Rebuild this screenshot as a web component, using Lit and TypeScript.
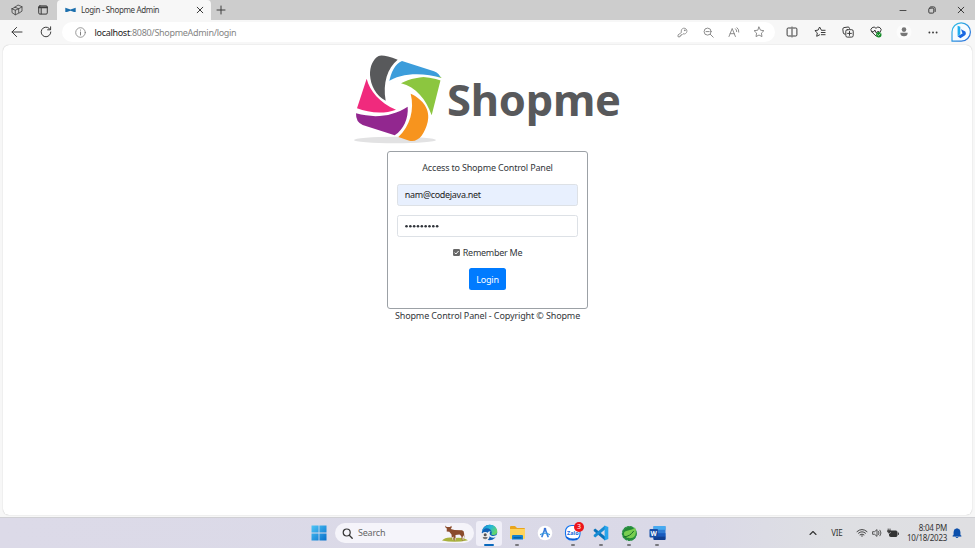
import { LitElement, html, css, svg, TemplateResult } from "lit";
import { customElement } from "lit/decorators.js";

const icon = (w: number, h: number, box: string, body: TemplateResult) =>
  html`<svg width=${w} height=${h} viewBox=${box} fill="none" stroke="currentColor" stroke-width="1" stroke-linecap="round" stroke-linejoin="round">${body}</svg>`;

const workspaces = icon(12, 12, "0 0 12 12", svg`<path stroke-width=".8" d="M4 3.2 7 1l4 1.700v4.400L8.200 9M4 3.200 7.600 4.800 11 2.900M1 4.800 4 3.200M1 4.800v3.800l3.300 2.200 3.400-1.600V4.900M1 4.800l3.300 1.400 3.300-1.400M4.300 6.200v4.500"/>`);
const tabActions = icon(10, 10, "0 0 10 10", svg`<rect x=".7" y=".9" width="8.600" height="8.200" rx="1.200"/><path d="M1 2.400h8" stroke-width="1.800"/><path d="M3.200 3.500v5.300"/>`);
const favicon = icon(11, 6, "0 0 11 6", svg`<path d="M.3.8 5.500 2.500 10.700.8v4.100L9 5.100 5.500 3.700 2 5.100.3 4.900z" fill="#1c6fad" stroke="none"/>`);
const back = icon(12, 12, "0 0 12 12", svg`<path d="M1 6h10M5.600 1.400 1 6l4.600 4.600"/>`);
const reload = icon(12, 12, "0 0 12 12", svg`<path d="M10.800 6A4.800 4.800 0 1 1 9.200 2.400L10.400 3.600M10.600.8v3H7.600"/>`);
const info = icon(11, 11, "0 0 11 11", svg`<circle cx="5.500" cy="5.500" r="4.800" stroke-width=".8"/><path d="M5.500 5v3M5.500 3v.2"/>`);
const key = icon(11, 11, "0 0 11 11", svg`<path d="M4.300 5.100A2.900 2.900 0 1 1 6 6.800L5 7.800H4v1H3v1H1V8.300z" stroke-width=".8"/><circle cx="7.700" cy="3.300" r=".3"/>`);
const zoomOut = icon(11, 11, "0 0 11 11", svg`<circle cx="4.600" cy="4.600" r="3.500" stroke-width=".9"/><path d="M3 4.600h3.200M7.300 7.300 10.200 10.200" stroke-width=".9"/>`);
const readAloud = icon(12, 11, "0 0 12 11", svg`<path d="m1 9.500 3.200-8 3.200 8M2.200 6.700h4M7.500 1.800q1.300 1 1.200 2.800M9 .7q2.200 1.600 1.800 4.400" stroke-width=".9"/>`);
const star = icon(12, 12, "0 0 12 12", svg`<path d="M6 1.100 7.500 4.200l3.400.5-2.500 2.400.6 3.500L6 9l-3 1.600.6-3.500L1.100 4.700l3.400-.5z" stroke-width=".9"/>`);
const split = icon(12, 12, "0 0 12 12", svg`<path d="M5 2H2.200Q1.100 2 1.100 3.100v5.800Q1.100 10 2.200 10H5M7 2h2.800q1.100 0 1.100 1.100v5.800q0 1.100-1.100 1.100H7M6 1v10"/>`);
const favorites = icon(12, 12, "0 0 12 12", svg`<path d="M7.300 4 5.600 1 4.100 4.100.9 4.600l2.400 2.300-.6 3.400L5.600 8.800M7.700 4.300h3.400M7.300 6.500h3.800M7.300 8.700h3.800"/>`);
const collections = icon(12, 12, "0 0 12 12", svg`<path d="M2.800 8.200Q1.600 8.200 1.300 7L.8 3.100Q.8 1.900 2 1.600L6.100 1q1.300 0 1.500 1.400"/><rect x="3.800" y="3.700" width="7.400" height="7.400" rx="1.500"/><path d="M7.500 5.500v3.800M5.600 7.400h3.800"/>`);
const essentials = icon(12, 12, "0 0 12 12", svg`<path d="M6.200 10.200 1.500 5.600A2.600 2.600 0 0 1 6 2.300a2.600 2.600 0 0 1 4.600 3.300M1.600 5.700h2.200l1-1.700 1.500 3 1-1.400H9"/><circle cx="8.800" cy="8.700" r="2.700" fill="#118a25" stroke="none"/><path d="m7.500 8.700 1 1 1.700-1.900" stroke="#fff" stroke-width=".7"/>`);
const profile = icon(16, 16, "0 0 16 16", svg`<circle cx="8" cy="8" r="7.500" fill="#fcfcfc" stroke="none"/><g fill="#777" stroke="none"><circle cx="8" cy="5.600" r="2.300"/><path d="M4.300 8.700h7.400q0 3.600-3.700 3.600T4.300 8.700"/></g>`);
const dots = icon(10, 3, "0 0 10 3", svg`<g fill="currentColor" stroke="none"><circle cx="1.400" cy="1.500" r=".95"/><circle cx="5" cy="1.500" r=".95"/><circle cx="8.600" cy="1.500" r=".95"/></g>`);
const bing = icon(20, 20, "0 0 20 20", svg`
  <defs><linearGradient id="bg" x1="0" y1="0" x2="1" y2="1"><stop stop-color="#37c4e8"/><stop offset="1" stop-color="#2465d8"/></linearGradient></defs>
  <path d="M1 19.200V10A9.200 9.200 0 1 1 10.200 19.200z" fill="#f6fcff" stroke="url(#bg)" stroke-width="1.200"/>
  <path d="M6.600 3.800 9.300 4.800v7.400l-2.700 2z" fill="#20aef0" stroke="none"/><path d="m10 7.200 4.300 2.300q1.400 2.600-.6 4.100l-4.300 2.600-2.800-2 4.900-2.700z" fill="#1767e2" stroke="none"/>`);
const close = icon(8, 8, "0 0 8 8", svg`<path d="m1.200 1.200 5.600 5.600M6.800 1.200 1.200 6.800"/>`);
const plus = icon(10, 10, "0 0 10 10", svg`<path d="M5 1v8M1 5h8"/>`);
const minimize = icon(8, 8, "0 0 8 8", svg`<path d="M1 4.500h6" stroke-width=".9"/>`);
const restore = icon(8, 8, "0 0 8 8", svg`<rect x=".8" y="2.100" width="5" height="5" rx="1"/><path d="M2.600.9h3Q7.200.9 7.200 2.500v3"/>`);

const emblem = html`<svg class="emblem" viewBox="0 0 420 300" width="140" height="100">
  <defs><filter id="soft" x="-10%" y="-50%" width="120%" height="200%"><feGaussianBlur stdDeviation="1.500"/></filter></defs>
  <ellipse cx="150" cy="276" rx="123" ry="10" fill="#e2e2e3" filter="url(#soft)"/>
  <path fill="#58595b" d="M122 158C92 143 77 112 75 81C74 56 84 33 101 24Q113 18 158 35C127 60 113 105 122 158Z"/>
  <path fill="#3c9ddb" d="M132 106C137 72 151 47 171 39L267 70Q284 76 289 94C234 77 173 80 132 106Z"/>
  <path fill="#8cc63f" d="M168 106C200 87 248 84 289 87L260 202C243 154 213 117 168 106Z"/>
  <path fill="#fff" d="M125 112C170 83 228 79 292 99L292 91C232 72 169 74 125 103Z"/>
  <path fill="#f02a7d" d="M65 92C74 128 104 164 153 185C115 200 70 194 36 181Z"/>
  <path fill="#92278f" d="M33 196C91 212 142 205 188 176C191 211 176 244 149 262L53 231Q32 222 33 196Z"/>
  <path fill="#f7941e" d="M197 137C235 154 257 186 248 222C239 259 219 285 193 278L160 267C195 234 209 186 197 137Z"/>
</svg>`;

const passwordDots = html`<svg width="34" height="4" viewBox="0 0 34 4" fill="#30343a">${Array.from({ length: 9 }, (_, i) => svg`<circle cx=${1.5 + i * 3.83} cy="2.2" r="1.3"/>`)}</svg>`;

const windows = icon(16, 16, "0 0 16 16", svg`<defs><linearGradient id="wg" x1="0" y1="0" x2="1" y2="1"><stop stop-color="#4ec5f6"/><stop offset="1" stop-color="#0870cb"/></linearGradient></defs><path d="M.5.5h7.100v7.100H.5zM8.400.5h7.100v7.100H8.400zM.5 8.400h7.100v7.100H.5zM8.400 8.400h7.100v7.100H8.400z" fill="url(#wg)" stroke="none"/>`);
const search = icon(11, 11, "0 0 11 11", svg`<circle cx="4.700" cy="4.500" r="3.500" stroke-width="1.200"/><path d="m7.300 7.200 2.900 3" stroke-width="1.300"/>`);
const banteng = icon(27, 17, "0 0 27 17", svg`<g stroke="none"><path d="M0 15.500Q4 11 13 13q8-1 13 2.200-13 3.100-26 .3" fill="#a9b13c"/><path d="m3.200.5 1.500 1.500L8 2l1.400-1.300.3 1.800-1 1.500 3.800 1 7.500.2q2.200.6 2.100 3.200l.4 5-1-3.200-.7 1.300.6 3.900h-1.300L19.200 11l-1.700-1.500-4 .4.200 5.600h-1.200l-.8-4.500-.5 3.800h-1.200L9.500 9.500 7.300 6.700 4.700 6.500l.1-3-1.300-.9z" fill="#8a4b2c"/><path d="m10.100 12-.1 2.700h1.100l.1-2.700zM12.700 12.700l.1 2.800h1v-2.800zM20.200 12.300l.3 3h1.100l-.3-3z" fill="#dfd0bd"/></g>`);
const edge = icon(18, 18, "0 0 18 18", svg`<defs><linearGradient id="eg" x1="0" y1="0" x2="1" y2=".5"><stop stop-color="#1987d3"/><stop offset=".55" stop-color="#26b8d6"/><stop offset="1" stop-color="#64d66b"/></linearGradient></defs><g stroke="none"><circle cx="9.500" cy="8.500" r="7.700" fill="#1261b6"/><path d="M1.800 8.500C2.400 3.700 5.700.8 10 .8c4.500 0 7.300 3.400 7.300 6.700 0 3-2.700 4-5 3.400-1.500-.4-.7-1.200-.5-2.400-.4-2.900-2.700-4.300-5.200-4.200-2.300.1-4 1.800-4.800 4.200" fill="url(#eg)"/><path d="M10.500 7.200q-2.200 3 1 4.500 3 .8 5.800-1.200l-1 2.500-2.500.8Q8.500 13.500 7.500 9q.5-2 3-1.800" fill="#e5f1f8"/><circle cx="5.200" cy="12.200" r="4.300" fill="#eee"/><circle cx="5.200" cy="10.700" r="1.500" fill="#555"/><path d="M2.700 13h5q-.2 2.300-2.500 2.300T2.700 13" fill="#777"/></g>`);
const folder = icon(17, 16, "0 0 17 16", svg`<g stroke="none"><path d="M1 2Q1 1 2 1h4l2 2h7q1 0 1 1v4H1z" fill="#e9a51d"/><path d="M1 4h15v9q0 1-1 1H2q-1 0-1-1z" fill="#ffd45c"/><path d="M3 11q0-1 1-1h9q1 0 1 1v3.500H3z" fill="#1683ce"/><path d="M4.500 12h8v1.500h-8z" fill="#0861a8"/></g>`);
const studio = icon(16, 16, "0 0 16 16", svg`<circle cx="8" cy="8" r="7.300" fill="#fff" stroke="none"/><path d="M8 3.800 5 11.500M8 3.800l3 7.700" stroke="#3981dc" stroke-width="1.700"/><circle cx="8" cy="4" r="1.300" fill="#3b70d4" stroke="none"/><path d="M3.500 9.500Q8 7 12.500 9.500" stroke="#3999de" stroke-width="1.200"/>`);
const zalo = icon(18, 18, "0 0 18 18", svg`<rect x="1.500" y="1.500" width="14.500" height="14.500" rx="6" fill="#fff" stroke="#1375ef" stroke-width="1.100"/><path d="M3 13.500Q7 16.500 13 14.700" stroke="#085bd5" stroke-width="1.500"/><text x="3" y="10.700" class="zalo">Zalo</text>`);
const vscode = icon(16, 16, "0 0 16 16", svg`<g stroke="none"><path d="m.7 4.800 1.500-1.300 9.800 8.100v3.900L.7 5.900z" fill="#0872b9"/><path d="m.7 11.200 1.500 1.300L12 4.400V.5L.7 10.100z" fill="#168bd3"/><path d="m11.600.4 3.700 1.700v11.800l-3.700 1.700z" fill="#27a5ec"/></g>`);
const spring = icon(17, 17, "0 0 17 17", svg`<circle cx="8.400" cy="8.500" r="6.800" fill="#248936" stroke="#289043" stroke-width="1.500" stroke-dasharray="1.800 1.500"/><path d="M14 2.500c1.700 4.300 1 9-2.500 10.300-3.300 1.200-8.300-.1-8.600-4C2.700 4.500 10.600 6.500 14 2.500" fill="#78ce50" stroke="none"/><path d="M3.500 11.800q5.500-.3 9-5.500" stroke="#176c28" stroke-width="1"/>`);
const word = icon(17, 16, "0 0 17 16", svg`<g stroke="none"><rect x="4.500" y="1" width="12" height="14" rx="1" fill="#2f7bd3"/><path d="M4.500 1h12v3.800h-12z" fill="#47aaf0"/><path d="M4.500 8.200h12v3.500h-12z" fill="#185abd"/><path d="M4.500 11.500h12V14q0 1-1 1h-10q-1 0-1-1z" fill="#103f91"/><rect x=".5" y="4" width="8.500" height="8.500" rx="1" fill="#174ea6"/></g><text x="1.500" y="10.800" class="w">W</text>`);
const chevron = icon(8, 6, "0 0 8 6", svg`<path d="m1 4.500 3-3 3 3" stroke-width="1.100"/>`);
const wifi = icon(12, 10, "0 0 12 10", svg`<path d="M1 3.600q5-4.300 10 0M2.500 5.200q3.500-3 7 0M4 6.800q2-1.600 4 0" stroke-width=".9"/><circle cx="6" cy="8" r=".7" fill="currentColor" stroke="none"/>`);
const volume = icon(11, 10, "0 0 11 10", svg`<path d="M1 3.700h1.600L5 1.600v6.800L2.600 6.300H1zM6.600 3.500q1 1.500 0 3M8 2.200q2.200 2.800 0 5.600" stroke-width=".8"/>`);
const battery = icon(12, 10, "0 0 12 10", svg`<path d="M4 3h5q1 0 1 1v3.500q0 1-1 1H3.500q-1 0-1-1V6L4 5z" fill="currentColor"/><path d="M11.400 5v1.500"/><path d="M1.200 1v1.500M3 1v1.500M.7 2.800h2.800V4L2.100 5z" stroke-width=".9" fill="currentColor"/>`);
const bell = icon(10, 11, "0 0 10 11", svg`<path d="M5 .7Q1.900.7 1.900 4v2.500L.8 8.200h8.400L8.100 6.500V4Q8.100.7 5 .7M3.700 9q1.300 1.700 2.600 0" fill="#0b4fab" stroke="#0b4fab" stroke-width=".6"/>`);

@customElement("browser-chrome")
class BrowserChrome extends LitElement {
  static styles = css`
    :host { display: block; height: 45px; background: #f7f7f7; color: #3c3c3c; font-family: "Noto Sans", "Open Sans", sans-serif; }
    svg { display: block; }
    .tabs { height: 20px; display: flex; background: #cdcdcd; }
    .lead { width: 57px; display: flex; align-items: center; box-sizing: border-box; padding-left: 11px; gap: 15px; }
    .tab { width: 154px; box-sizing: border-box; background: #f7f7f7; border-radius: 4px 4px 0 0; display: flex; align-items: center; padding: 0 7px 0 8px; }
    .title { margin-left: 5px; flex: 1; font-size: 8px; line-height: 10px; letter-spacing: -.36px; white-space: nowrap; padding-bottom: 1px; }
    .add { margin: 5px 0 0 5px; }
    .window { margin-left: auto; display: flex; }
    .window span { width: 29px; display: grid; place-items: center; }
    .bar { height: 25px; display: flex; align-items: center; box-sizing: border-box; padding-bottom: 1px; }
    .nav { width: 62px; flex: none; box-sizing: border-box; padding-left: 11px; display: flex; gap: 17px; }
    .address { width: 713px; flex: none; height: 20px; box-sizing: border-box; border-radius: 10px; background: #fff; display: flex; align-items: center; padding: 0 3.500px 0 12.500px; color: #808080; margin-right: 3px; }
    .url { flex: 1; margin-left: 9px; font-size: 9px; letter-spacing: -.3px; color: #858585; }
    .url b { font-weight: 400; color: #222; }
    .cell { width: 25.300px; display: grid; place-items: center; }
    .tool { width: 28.100px; flex: none; display: grid; place-items: center; }
  `;
  render() {
    return html`
      <div class="tabs">
        <div class="lead">${workspaces}${tabActions}</div>
        <div class="tab">${favicon}<span class="title">Login - Shopme Admin</span>${close}</div>
        <div class="add">${plus}</div>
        <div class="window">${[minimize, restore, close].map((i) => html`<span>${i}</span>`)}</div>
      </div>
      <div class="bar">
        <div class="nav">${back}${reload}</div>
        <div class="address">${info}<span class="url"><b>localhost</b>:8080/ShopmeAdmin/login</span>
          ${[key, zoomOut, readAloud, star].map((i) => html`<span class="cell">${i}</span>`)}
        </div>
        ${[split, favorites, collections, essentials, profile, dots, bing].map((i) => html`<span class="tool">${i}</span>`)}
      </div>`;
  }
}

@customElement("login-page")
class LoginPage extends LitElement {
  static styles = css`
    :host { display: flex; flex-direction: column; align-items: center; height: 470px; margin: 0 3px; box-sizing: border-box; padding-top: 3px; background: #fff; border-radius: 6px; box-shadow: 0 0 1px #aaa; color: #33373b; font: 9px/14px "Noto Sans", "Open Sans", sans-serif; }
    .logo { width: 285px; height: 103px; display: flex; }
    .emblem { flex: none; margin-right: -38px; }
    .name { font-size: 43.500px; line-height: 60px; font-weight: 700; color: #58595b; margin-top: 21px; letter-spacing: -.25px; }
    .card { width: 200.500px; height: 157.500px; box-sizing: border-box; border: 1px solid #9ca1a6; border-radius: 3px; padding: 9px; display: flex; flex-direction: column; align-items: center; }
    .heading { letter-spacing: -.18px; }
    .field { align-self: stretch; height: 22.500px; box-sizing: border-box; border: 1px solid #dde1e6; border-radius: 2.500px; padding: 0 6.500px; display: flex; align-items: center; }
    .email { margin-top: 8.500px; background: #e8f0fe; color: #222; letter-spacing: -.3px; }
    .password { margin-top: 8.500px; }
    .remember { display: flex; align-items: center; gap: 3px; margin-top: 8.500px; letter-spacing: -.28px; }
    .check { display: block; }
    .button { margin-top: 8.500px; width: 37.500px; height: 22px; border: 0; padding: 0; border-radius: 2.500px; background: #007bff; color: #fff; font: 9px "Noto Sans", sans-serif; letter-spacing: -.2px; }
    .copyright { letter-spacing: -.13px; }
  `;
  render() {
    return html`
      <div class="logo">${emblem}<span class="name">Shopme</span></div>
      <div class="card">
        <span class="heading">Access to Shopme Control Panel</span>
        <div class="field email">nam@codejava.net</div>
        <div class="field password">${passwordDots}</div>
        <label class="remember"><svg class="check" width="7" height="7" viewBox="0 0 7 7"><rect width="7" height="7" rx="1.200" fill="#686868"/><path d="m1.500 3.600 1.400 1.400 2.700-3" fill="none" stroke="#fff"/></svg>Remember Me</label>
        <button class="button">Login</button>
      </div>
      <span class="copyright">Shopme Control Panel - Copyright © Shopme</span>`;
  }
}

@customElement("task-bar")
class TaskBar extends LitElement {
  static styles = css`
    :host { display: flex; align-items: center; height: 31px; box-sizing: border-box; border-top: 1px solid #d0d0d4; background: linear-gradient(90deg, #dcdae8, #dad9e7 72%, #dedfe3 85%, #dfdfe2); color: #333; font: 8px/10px "Noto Sans", "Open Sans", sans-serif; }
    svg { display: block; }
    .start { margin-left: 310.500px; }
    .search { width: 139px; height: 20px; margin: 0 1px 0 8.500px; border-radius: 10px; background: #f5f4fa; display: flex; align-items: center; box-sizing: border-box; padding: 0 5px 0 7px; }
    .search span { flex: 1; margin-left: 5px; font-size: 9px; letter-spacing: -.2px; color: #666; }
    .app { position: relative; width: 28px; height: 25px; display: grid; place-items: center; }
    .active { background: #f0eff8; border-radius: 3px; width: 26px; margin: 0 1px; }
    .running::after { content: ""; position: absolute; bottom: 0; left: 12px; width: 4px; height: 2px; border-radius: 1px; background: #77777d; }
    .active::after { left: 8px; width: 10px; background: #0868bd; }
    .badge { position: absolute; left: 15px; top: 1px; width: 10px; height: 10px; border-radius: 50%; background: #ed151b; color: #fff; font-size: 7px; text-align: center; }
    .zalo { font: 700 5.500px "Open Sans"; fill: #1768d8; stroke: none; }
    .w { font: 700 6.500px "Open Sans"; fill: #fff; stroke: none; }
    .tray { margin-left: auto; display: flex; align-items: center; padding-right: 13px; }
    .lang { margin: 0 13px 0 14.500px; letter-spacing: -.25px; }
    .status { display: flex; gap: 4px; }
    .clock { text-align: right; margin: 0 5px 0 8.500px; letter-spacing: -.25px; width: 40px; white-space: nowrap; }
  `;
  render() {
    const apps = [folder, studio, zalo, vscode, spring, word];
    return html`
      <span class="start">${windows}</span>
      <div class="search">${search}<span>Search</span>${banteng}</div>
      <div class="app active running">${edge}</div>
      ${apps.map((a) => html`<div class="app ${a === studio ? "" : "running"}">${a}${a === zalo ? html`<span class="badge">3</span>` : ""}</div>`)}
      <div class="tray">${chevron}<span class="lang">VIE</span><div class="status">${wifi}${volume}${battery}</div>
        <div class="clock">8:04 PM<br />10/18/2023</div>${bell}</div>`;
  }
}

@customElement("app-root")
class AppRoot extends LitElement {
  static styles = css`
    :host { display: flex; flex-direction: column; width: 975px; height: 548px; overflow: hidden; background: #f7f7f7; }
    task-bar { margin-top: auto; }
  `;
  render() {
    return html`<browser-chrome></browser-chrome><login-page></login-page><task-bar></task-bar>`;
  }
}
